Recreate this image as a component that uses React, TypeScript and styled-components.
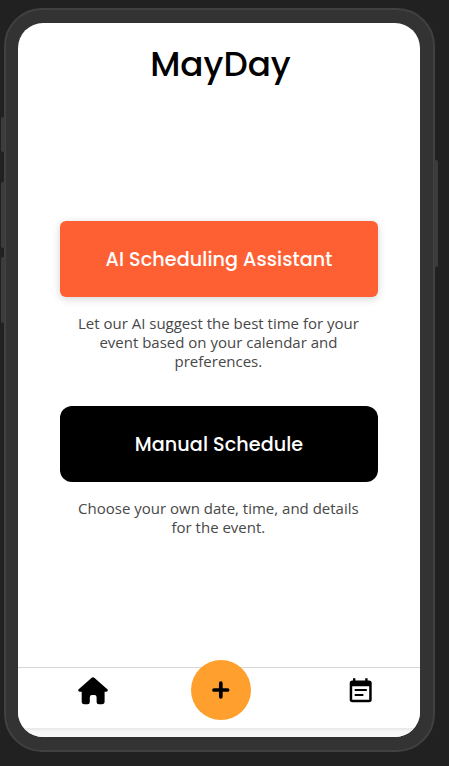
import React from 'react';
import styled, { createGlobalStyle } from 'styled-components';

const GlobalStyle = createGlobalStyle`
  * { box-sizing: border-box; }
  html, body { margin: 0; background: #212121; }
  body { overflow: hidden; -webkit-font-smoothing: antialiased; }
  button { border: 0; padding: 0; cursor: pointer; }
`;

const Stage = styled.main`
  height: 766px;
  padding: 8px 0 0 4px;
  background: #212121;
`;

const Phone = styled.div`
  position: relative;
  width: 431.4px;
  height: 744.4px;
  padding: 12.5px 13.5px 13px 12px;
  border: 2px solid #414141;
  border-radius: 38px;
  background: #333333;
`;

const SideKey = styled.span<{ $side: 'left' | 'right'; $top: number; $length: number }>`
  position: absolute;
  ${({ $side }) => ($side === 'left' ? 'left: -5.5px;' : 'right: -5px;')}
  top: ${({ $top }) => $top}px;
  width: 4px;
  height: ${({ $length }) => $length}px;
  border-radius: ${({ $side }) => ($side === 'left' ? '2px 0 0 2px' : '0 2px 2px 0')};
  background: #3c3c3c;
`;

const Screen = styled.div`
  display: flex;
  flex-direction: column;
  width: 402px;
  height: 714.5px;
  overflow: hidden;
  border-radius: 25px;
  background: #ffffff;
`;

const Title = styled.h1`
  height: 84px;
  margin: 0;
  padding-left: 3px;
  text-align: center;
  font: 500 34.2px/83px Poppins, Inter, sans-serif;
  color: #000000;
`;

const Content = styled.section`
  flex: 1;
  display: flex;
  flex-direction: column;
  align-items: center;
  padding-top: 114.5px;
`;

const Option = styled.div`
  width: 318px;
  height: 185px;
`;

const OptionButton = styled.button<{ $accent?: boolean }>`
  display: block;
  width: 100%;
  height: 76px;
  padding-top: 1px;
  border-radius: ${({ $accent }) => ($accent ? 6 : 12)}px;
  background: ${({ $accent }) => ($accent ? '#ff6033' : '#000000')};
  box-shadow: ${({ $accent }) => ($accent ? '0 2px 8px rgba(0, 0, 0, 0.17)' : 'none')};
  color: #ffffff;
  font: 500 19.2px/75px Poppins, Inter, sans-serif;
  letter-spacing: 0.05px;
`;

const Hint = styled.p`
  width: 290px;
  margin: 17px 0 0 13.4px;
  text-align: center;
  font: 400 15px/19px 'Open Sans', sans-serif;
  color: #484848;
`;

const TabBar = styled.nav`
  display: grid;
  grid-template-columns: 150px 105px 1fr;
  height: 61.5px;
  flex: none;
  border-top: 1px solid #d6d6d6;
  background: #ffffff;
`;

const Tab = styled.button`
  display: flex;
  justify-content: center;
  padding-top: 8px;
  background: none;
`;

const ScheduleTab = styled(Tab)`
  padding-left: 28px;
`;

const AddButton = styled.button`
  display: flex;
  align-items: center;
  justify-content: center;
  width: 60px;
  height: 60px;
  margin: -8px 0 0 22.5px;
  border-radius: 50%;
  background: #ff9f2d;
`;

const HomeInset = styled.div`
  height: 9px;
  flex: none;
  background: linear-gradient(#e9e9e9 0, #eeeeee 2px, #f7f7f7 3px, #fafafa 100%);
`;

const HomeIcon = () => (
  <svg width="30" height="30" viewBox="0 0 30 30" aria-hidden="true">
    <path d="M13.7 1.8Q15 .6 16.3 1.8L29.3 13.2Q30.2 14.2 29.6 15.1Q29.2 15.8 28 15.8H26.6V25.5Q26.6 28.2 24 28.2H20.8Q18.6 28.2 18.6 26V21.2Q18.6 19 16.4 19H14Q11.8 19 11.8 21.2V26Q11.8 28.2 9.6 28.2H6.3Q3.7 28.2 3.7 25.5V15.8H2Q.8 15.8.4 15.1Q-.2 14.2.7 13.2Z" />
  </svg>
);

const PlusIcon = () => (
  <svg width="18" height="18" viewBox="0 0 18 18" aria-hidden="true">
    <path d="M8.8 2.2V15.8M2 9H15.6" fill="none" stroke="#000" strokeWidth="3.7" strokeLinecap="round" />
  </svg>
);

const CalendarIcon = () => (
  <svg width="24" height="28" viewBox="0 0 24 28" aria-hidden="true">
    <path d="M4 2.2H6.4V4.5H16.2V2.2H18.6V4.5H20.1Q22.7 4.5 22.7 7.1V23.6Q22.7 26.2 20.1 26.2H3.3Q.7 26.2.7 23.6V7.1Q.7 4.5 3.3 4.5H4ZM3.2 10.2V23.7H20.2V10.2Z" fillRule="evenodd" />
    <path d="M5.7 14H17.8M5.7 19H14.4" fill="none" stroke="#000" strokeWidth="2.2" />
  </svg>
);

export default function App() {
  return (
    <>
      <GlobalStyle />
      <Stage>
        <Phone>
          <SideKey $side="left" $top={107} $length={34.5} />
          <SideKey $side="left" $top={171.5} $length={66} />
          <SideKey $side="left" $top={246.5} $length={66.5} />
          <SideKey $side="right" $top={150} $length={107} />
          <Screen>
            <Title>MayDay</Title>
            <Content>
              <Option>
                <OptionButton $accent>AI Scheduling Assistant</OptionButton>
                <Hint>Let our AI suggest the best time for your event based on your calendar and preferences.</Hint>
              </Option>
              <Option>
                <OptionButton>Manual Schedule</OptionButton>
                <Hint>Choose your own date, time, and details for the event.</Hint>
              </Option>
            </Content>
            <TabBar>
              <Tab aria-label="Home"><HomeIcon /></Tab>
              <AddButton aria-label="Add event"><PlusIcon /></AddButton>
              <ScheduleTab aria-label="Calendar"><CalendarIcon /></ScheduleTab>
            </TabBar>
            <HomeInset />
          </Screen>
        </Phone>
      </Stage>
    </>
  );
}
